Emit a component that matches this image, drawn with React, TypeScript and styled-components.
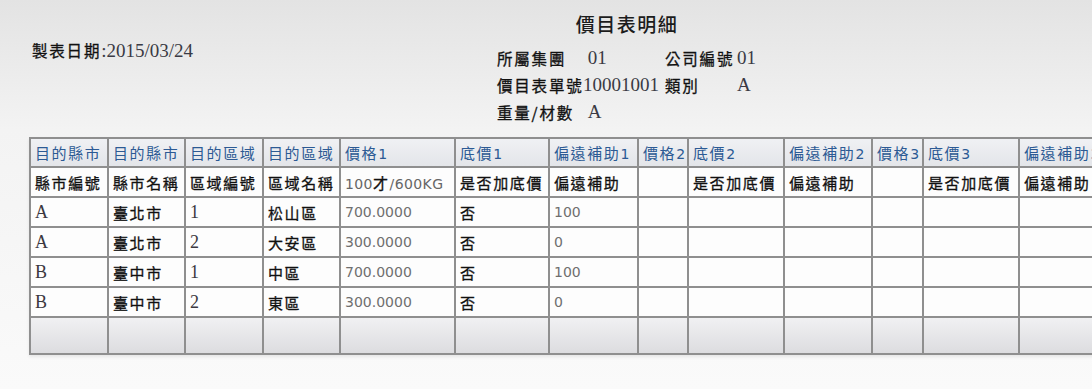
import React from "react";
import styled, { createGlobalStyle, css } from "styled-components";

const GlobalStyle = createGlobalStyle`
  html, body {
    margin: 0;
    padding: 0;
    overflow: hidden;
  }
  body {
    width: 1092px;
    height: 389px;
    background: linear-gradient(#e3e3e3 0px, #f3f3f3 130px, #fafafa 389px);
    font-family: "Noto Sans CJK TC", "Liberation Serif", serif;
    color: #151515;
  }
`;

const CJK = `"Noto Sans CJK TC", "Noto Sans CJK SC", sans-serif`;
const SERIF = `"Liberation Serif", "Noto Sans CJK TC", serif`;
const SANS = `"DejaVu Sans", "Noto Sans CJK TC", sans-serif`;

const Page = styled.div`
  width: 1092px;
  height: 389px;
  overflow: hidden;
`;

const Header = styled.div`
  display: grid;
  grid-template-columns: 497px 270px;
  height: 137px;
`;

const DateLine = styled.div`
  padding: 39px 0 0 32px;
  line-height: 22px;
  white-space: nowrap;
`;

const Label = styled.span`
  font-family: ${CJK};
  font-size: 15.5px;
  font-weight: 400;
  letter-spacing: 1.8px;
  color: #111;
  -webkit-text-stroke: 0.3px #111;
`;

const Num = styled.span<{ $tone?: string }>`
  font-family: ${SERIF};
  font-size: 19px;
  color: ${(p) => p.$tone ?? "#3a3a44"};
`;

const RightBlock = styled.div`
  display: flex;
  flex-direction: column;
`;

const Title = styled.div`
  margin: 12px 0 0 -10px;
  text-align: center;
  font-family: ${CJK};
  font-size: 19px;
  font-weight: 500;
  letter-spacing: 1.5px;
  line-height: 24px;
  color: #1c1c1c;
`;

const InfoGrid = styled.div`
  margin-top: 8px;
  display: grid;
  grid-template-columns: 86px 82px 72px auto;
  grid-auto-rows: 27px;
  align-items: center;
  white-space: nowrap;
`;

const Grid = styled.table`
  margin-left: 29px;
  border-collapse: collapse;
  table-layout: fixed;
  width: 1085px;
  border: 2px solid #8f8f8f;
  box-shadow: 0 2px 3px rgba(0, 0, 0, 0.08);
`;

const Col = styled.col<{ $w: number }>`
  width: ${(p) => p.$w}px;
`;

type RowKind = "head" | "sub" | "data" | "foot";

const Row = styled.tr<{ $kind: RowKind }>`
  height: ${(p) => (p.$kind === "head" ? 29 : p.$kind === "foot" ? 37 : 30)}px;
  ${(p) =>
    p.$kind === "head" &&
    css`
      background: linear-gradient(#f0f1f4, #e3e5e9);
    `}
  ${(p) =>
    (p.$kind === "sub" || p.$kind === "data") &&
    css`
      background: #fdfdfd;
    `}
  ${(p) =>
    p.$kind === "foot" &&
    css`
      background: linear-gradient(#f1f1f3, #dcdcdf);
    `}
`;

type CellKind = "head" | "cjk" | "serif" | "num";

const Cell = styled.td<{ $kind?: CellKind }>`
  border: 2px solid #8f8f8f;
  padding: 0 3px 0 4px;
  white-space: nowrap;
  overflow: hidden;
  vertical-align: middle;
  ${(p) => {
    switch (p.$kind) {
      case "head":
        return css`
          font-family: ${CJK};
          font-size: 15px;
          letter-spacing: 1.6px;
          color: #2c5a94;
        `;
      case "serif":
        return css`
          font-family: ${SERIF};
          font-size: 18px;
          color: #3b3840;
        `;
      case "num":
        return css`
          font-family: ${SANS};
          font-size: 14px;
          color: #6f6f6f;
        `;
      default:
        return css`
          font-family: ${CJK};
          font-size: 15px;
          font-weight: 400;
          letter-spacing: 1.6px;
          color: #111;
          -webkit-text-stroke: 0.3px #111;
        `;
    }
  }}
`;

const HeadNum = styled.span`
  font-family: ${SANS};
  font-size: 14px;
  letter-spacing: 0;
`;

const SubMix = styled.span`
  font-family: ${SANS};
  font-size: 14px;
  letter-spacing: 0.4px;
  color: #666;
  -webkit-text-stroke: 0;
`;

const widths = [78, 77, 78, 77, 115, 94, 89, 50, 96, 88, 51, 96, 96];

const heads: [string, string][] = [
  ["目的縣市", ""],
  ["目的縣市", ""],
  ["目的區域", ""],
  ["目的區域", ""],
  ["價格", "1"],
  ["底價", "1"],
  ["偏遠補助", "1"],
  ["價格", "2"],
  ["底價", "2"],
  ["偏遠補助", "2"],
  ["價格", "3"],
  ["底價", "3"],
  ["偏遠補助", "3"],
];

const subs = ["縣市編號", "縣市名稱", "區域編號", "區域名稱", "MIX", "是否加底價", "偏遠補助", "", "是否加底價", "偏遠補助", "", "是否加底價", "偏遠補助"];

const rows = [
  ["A", "臺北市", "1", "松山區", "700.0000", "否", "100"],
  ["A", "臺北市", "2", "大安區", "300.0000", "否", "0"],
  ["B", "臺中市", "1", "中區", "700.0000", "否", "100"],
  ["B", "臺中市", "2", "東區", "300.0000", "否", "0"],
];

const dataKinds: CellKind[] = ["serif", "cjk", "serif", "cjk", "num", "cjk", "num"];

export default function App() {
  return (
    <Page>
      <GlobalStyle />
      <Header>
        <DateLine>
          <Label>製表日期</Label>
          <Num>:2015/03/24</Num>
        </DateLine>
        <RightBlock>
          <Title>價目表明細</Title>
          <InfoGrid>
            <Label>所屬集團</Label>
            <Num>&nbsp;01</Num>
            <Label>公司編號</Label>
            <Num>01</Num>
            <Label>價目表單號</Label>
            <Num>10001001</Num>
            <Label>類別</Label>
            <Num>A</Num>
            <Label>重量/材數</Label>
            <Num>&nbsp;A</Num>
          </InfoGrid>
        </RightBlock>
      </Header>
      <Grid>
        <colgroup>
          {widths.map((w, i) => (
            <Col key={i} $w={w} />
          ))}
        </colgroup>
        <tbody>
          <Row $kind="head">
            {heads.map(([t, n], i) => (
              <Cell key={i} $kind="head">
                {t}
                {n && <HeadNum>{n}</HeadNum>}
              </Cell>
            ))}
          </Row>
          <Row $kind="sub">
            {subs.map((s, i) => (
              <Cell key={i} $kind="cjk">
                {s === "MIX" ? (
                  <>
                    <SubMix>100</SubMix>才<SubMix>/600KG</SubMix>
                  </>
                ) : (
                  s
                )}
              </Cell>
            ))}
          </Row>
          {rows.map((r, ri) => (
            <Row key={ri} $kind="data">
              {widths.map((_, ci) => (
                <Cell key={ci} $kind={dataKinds[ci] ?? "cjk"}>
                  {r[ci] ?? ""}
                </Cell>
              ))}
            </Row>
          ))}
          <Row $kind="foot">
            {widths.map((_, ci) => (
              <Cell key={ci} />
            ))}
          </Row>
        </tbody>
      </Grid>
    </Page>
  );
}
